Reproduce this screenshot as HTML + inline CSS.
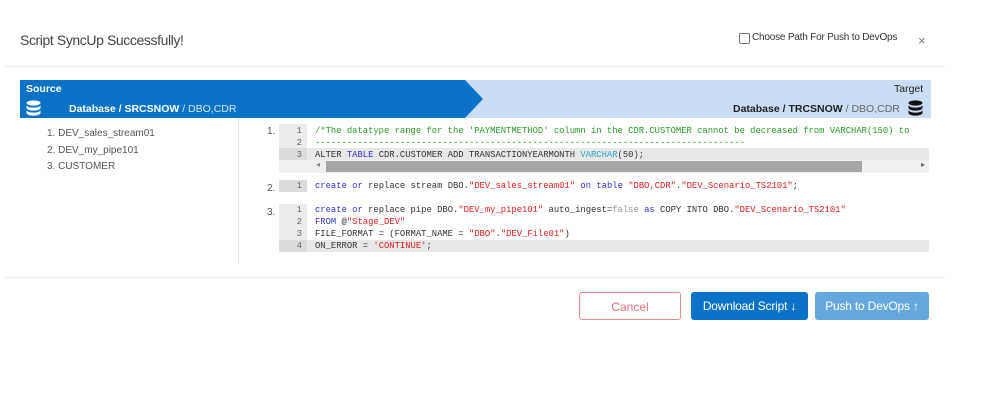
<!DOCTYPE html>
<html><head><style>
body{margin:0;width:985px;height:404px;background:#fff;font-family:"Liberation Sans",sans-serif;position:relative;overflow:hidden;color:#333}
.a{position:absolute}
.code{font-family:"Liberation Mono",monospace;font-size:8.85px;white-space:pre;color:#333}
.ln{position:absolute;left:0;width:28px;text-align:right;color:#666;font-family:"Liberation Mono",monospace;font-size:9px}
.kw{color:#3333cc}.st{color:#e02020}.cm{color:#2a9a2a}.ty{color:#2aa8c0}.gr{color:#999}
.btn{position:absolute;top:292px;height:28px;border-radius:3px;font-size:12px;text-align:center;line-height:28px;box-sizing:border-box}
</style></head><body>
<div class="a" style="left:20px;top:32px;font-size:14px;color:#444;letter-spacing:-0.4px">Script SyncUp Successfully!</div>
<div class="a" style="left:739px;top:33px;width:9px;height:9px;border:1px solid #777;border-radius:2px"></div>
<div class="a" style="left:752px;top:32px;font-size:10px;color:#333;letter-spacing:-0.2px">Choose Path For Push to DevOps</div>
<div class="a" style="left:918px;top:33px;font-size:13px;color:#777">×</div>
<div class="a" style="left:4px;top:66px;width:941px;height:1px;background:#eee"></div>

<svg class="a" style="left:20px;top:80px" width="911" height="38">
<rect x="0" y="0" width="911" height="38" fill="#cbddf3"/>
<polygon points="0,0 445,0 463,19 445,38 0,38" fill="#0a73c8"/>
</svg>
<div class="a" style="left:26px;top:83px;font-size:10.5px;font-weight:bold;color:#fff">Source</div>
<svg class="a" style="left:26px;top:100px" width="15" height="16"><ellipse cx="7.5" cy="3" rx="7" ry="2.6" fill="#fff"/><path d="M0.5 5 v3 a7 2.6 0 0 0 14 0 v-3 a7 2.6 0 0 1 -14 0z" fill="#fff"/><path d="M0.5 10 v3 a7 2.6 0 0 0 14 0 v-3 a7 2.6 0 0 1 -14 0z" fill="#fff"/></svg>
<div class="a" style="left:69px;top:103px;font-size:10.5px;color:#fff"><b>Database / SRCSNOW</b> <span style="color:#d6e6f8">/ DBO,CDR</span></div>
<div class="a" style="left:894px;top:83px;font-size:10.5px;color:#222">Target</div>
<div class="a" style="left:733px;top:103px;font-size:10.5px;color:#222"><b>Database / TRCSNOW</b> <span style="color:#666">/ DBO,CDR</span></div>
<svg class="a" style="left:908px;top:100px" width="15" height="16"><ellipse cx="7.5" cy="3" rx="7" ry="2.6" fill="#111"/><path d="M0.5 5 v3 a7 2.6 0 0 0 14 0 v-3 a7 2.6 0 0 1 -14 0z" fill="#111"/><path d="M0.5 10 v3 a7 2.6 0 0 0 14 0 v-3 a7 2.6 0 0 1 -14 0z" fill="#111"/></svg>

<div class="a" style="left:47px;top:126px;font-size:10px;color:#555;line-height:16.5px">1. DEV_sales_stream01<br>2. DEV_my_pipe101<br>3. CUSTOMER</div>
<div class="a" style="left:238px;top:118px;width:1px;height:146px;background:#e5e5e5"></div>

<!-- block1 -->
<div class="a" style="left:267px;top:126px;font-size:10px;color:#555">1.</div>
<div class="a" style="left:279px;top:124px;width:28px;height:49px;background:#ececec"></div>
<div class="a" style="left:279px;top:148px;width:650px;height:12px;background:#e8e8e8"></div>
<div class="a" style="left:279px;top:148px;width:28px;height:12px;background:#dcdcdc"></div>
<div class="ln" style="left:274px;top:125px;line-height:12px">1<br>2<br>3</div>
<div class="a code" style="left:315px;top:125px;line-height:12px;width:614px;overflow:hidden"><span class="cm">/*The datatype range for the 'PAYMENTMETHOD' column in the CDR.CUSTOMER cannot be decreased from VARCHAR(150) to</span>
<span class="cm">---------------------------------------------------------------------------------</span>
ALTER <span class="kw">TABLE</span> CDR.CUSTOMER ADD TRANSACTIONYEARMONTH <span class="ty">VARCHAR</span>(50);</div>
<div class="a" style="left:279px;top:160px;width:650px;height:13px;background:#f0f0f0"></div>
<div class="a" style="left:326px;top:161px;width:536px;height:11px;background:#a6a6a6"></div>
<div class="a" style="left:316px;top:160px;font-size:8px;color:#888">◂</div>
<div class="a" style="left:921px;top:160px;font-size:8px;color:#666">▸</div>

<!-- block2 -->
<div class="a" style="left:267px;top:183px;font-size:10px;color:#555">2.</div>
<div class="a" style="left:279px;top:180px;width:28px;height:12px;background:#dcdcdc"></div>
<div class="ln" style="left:274px;top:180px;line-height:12px">1</div>
<div class="a code" style="left:315px;top:180px;line-height:12px"><span class="kw">create</span> <span class="kw">or</span> replace stream DBO.<span class="st">"DEV_sales_stream01"</span> <span class="kw">on</span> <span class="kw">table</span> <span class="st">"DBO,CDR"</span>.<span class="st">"DEV_Scenario_TS2101"</span>;</div>

<!-- block3 -->
<div class="a" style="left:267px;top:207px;font-size:10px;color:#555">3.</div>
<div class="a" style="left:279px;top:204px;width:28px;height:48px;background:#ececec"></div>
<div class="a" style="left:279px;top:240px;width:650px;height:12px;background:#e8e8e8"></div>
<div class="a" style="left:279px;top:240px;width:28px;height:12px;background:#dcdcdc"></div>
<div class="ln" style="left:274px;top:204px;line-height:12px">1<br>2<br>3<br>4</div>
<div class="a code" style="left:315px;top:204px;line-height:12px"><span class="kw">create</span> <span class="kw">or</span> replace pipe DBO.<span class="st">"DEV_my_pipe101"</span> auto_ingest=<span class="gr">false</span> <span class="kw">as</span> COPY INTO DBO.<span class="st">"DEV_Scenario_TS2101"</span>
<span class="kw">FROM</span> @<span class="st">"Stage_DEV"</span>
FILE_FORMAT = (FORMAT_NAME = <span class="st">"DBO"</span>.<span class="st">"DEV_File01"</span>)
ON_ERROR = <span class="st">'CONTINUE'</span>;</div>

<div class="a" style="left:4px;top:277px;width:941px;height:1px;background:#eee"></div>
<div class="btn" style="left:579px;width:102px;border:1px solid #f08a95;color:#e8707c">Cancel</div>
<div class="btn" style="left:691px;width:117px;background:#0a73c8;color:#fff;letter-spacing:-0.2px">Download Script <b>↓</b></div>
<div class="btn" style="left:815px;width:114px;background:#65a8de;color:#fff;letter-spacing:-0.2px">Push to DevOps <b>↑</b></div>
</body></html>
